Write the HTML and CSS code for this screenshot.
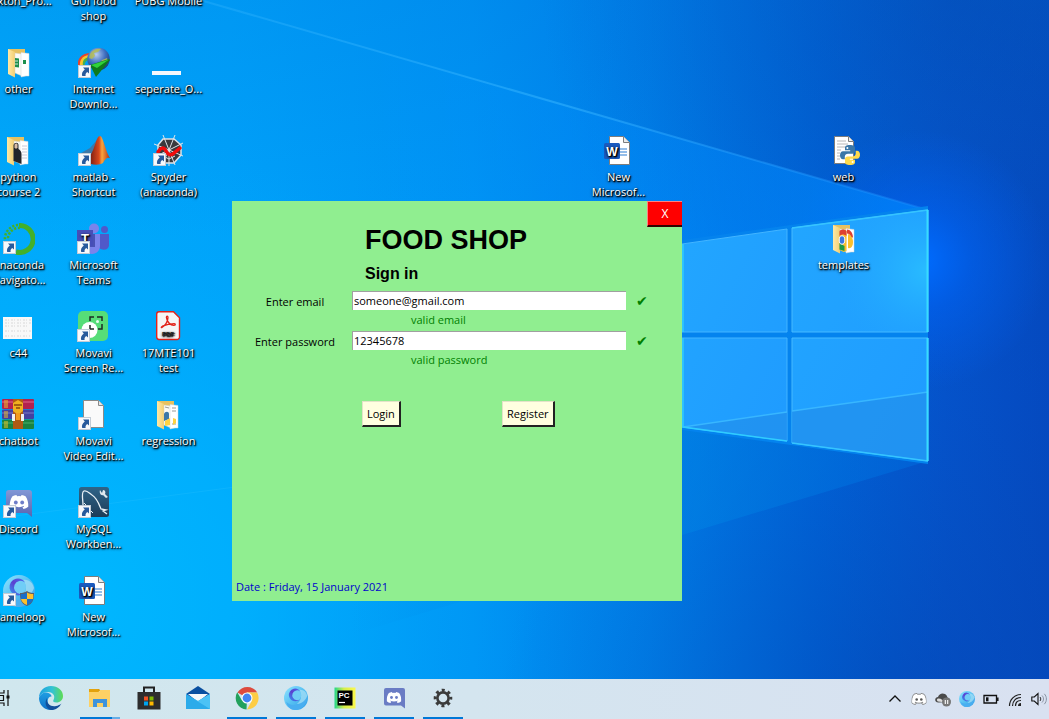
FILE: index.html
```html
<!DOCTYPE html>
<html lang="en">
<head>
<meta charset="utf-8">
<meta name="viewport" content="width=device-width, initial-scale=1">
<title>Food Shop</title>
<link rel="stylesheet" href="styles.css">
</head>
<body class="screen">

<svg class="defs" aria-hidden="true">
  <defs>
    <linearGradient id="folder" x1="0" y1="0" x2="1" y2="0"><stop offset="0" stop-color="#ffe9a6"/><stop offset="1" stop-color="#f3cf73"/></linearGradient>
    <radialGradient id="globe" cx=".4" cy=".3" r=".8"><stop offset="0" stop-color="#b9cdf0"/><stop offset=".5" stop-color="#3f6fc0"/><stop offset="1" stop-color="#12305f"/></radialGradient>
    <linearGradient id="flame" x1="0" y1="0" x2="1" y2="0"><stop offset="0" stop-color="#7a1d12"/><stop offset=".45" stop-color="#d9481c"/><stop offset=".6" stop-color="#f9a53c"/><stop offset="1" stop-color="#b52c12"/></linearGradient>
    <linearGradient id="blurple" x1="0" y1="0" x2="0" y2="1"><stop offset="0" stop-color="#8297d6"/><stop offset="1" stop-color="#5865b0"/></linearGradient>
    <linearGradient id="slate" x1="0" y1="0" x2="0" y2="1"><stop offset="0" stop-color="#2f6488"/><stop offset="1" stop-color="#1d3c58"/></linearGradient>
    <linearGradient id="orb" x1="0" y1="0" x2="1" y2="1"><stop offset="0" stop-color="#8fe4ff"/><stop offset=".5" stop-color="#56c0f2"/><stop offset="1" stop-color="#2f9be8"/></linearGradient>
    <linearGradient id="orbring" x1="1" y1="0" x2="0" y2="1"><stop offset="0" stop-color="#4b6cf0"/><stop offset=".5" stop-color="#5c3fd0"/><stop offset="1" stop-color="#2fa0f5"/></linearGradient>
    <linearGradient id="edgetop" x1="0" y1="0" x2="1" y2="0"><stop offset="0" stop-color="#1c9fe0"/><stop offset=".55" stop-color="#33c3d4"/><stop offset="1" stop-color="#5fdc52"/></linearGradient>
    <linearGradient id="edgeleft" x1="0" y1="0" x2="0" y2="1"><stop offset="0" stop-color="#1f9ee3"/><stop offset="1" stop-color="#0f6fc6"/></linearGradient>
    <linearGradient id="pycharm" x1="0" y1="0" x2="1" y2="0"><stop offset="0" stop-color="#21d789"/><stop offset=".45" stop-color="#d6ee4a"/><stop offset="1" stop-color="#fcf84a"/></linearGradient>

    <symbol id="shortcut" viewBox="0 0 13 13">
      <rect x=".5" y=".5" width="12" height="12" fill="#f7f9fc" stroke="#c3ccd6"/>
      <path d="M5 2.500h6v6L9.300 6.900C7.800 8 7.300 9.200 7.600 11H4.200C3.400 8.600 4.400 6.200 6.800 4.400z" fill="#285a9c"/>
    </symbol>
    <symbol id="word" viewBox="0 0 32 32">
      <path d="M6.500 1.500h14l6 6v22h-20z" fill="#fff" stroke="#7d7d7d"/>
      <path d="M20.500 1.500v6h6" fill="#e9e9e9" stroke="#7d7d7d"/>
      <path d="M17 14h7M17 17h7M17 20h7" stroke="#2b7cd3" stroke-width="1.200"/>
      <rect x="1" y="8" width="16" height="16" rx="1.500" fill="#1a5abe"/>
      <text x="9" y="20.500" text-anchor="middle" font-family="Liberation Sans, sans-serif" font-size="12" font-weight="700" fill="#fff">W</text>
    </symbol>
    <symbol id="folderbase" viewBox="0 0 32 32">
      <path d="M5 2h17v24H5z" fill="#e6c160"/>
      <path d="M5 2l7 3v25.500L5 27z" fill="url(#folder)"/>
      <path d="M12 6l7 1v22l-7-3z" fill="#fbfbf6" stroke="#d8d2bb" stroke-width=".5"/>
      <path d="M18 5.500l8 1V29h-3l-5 1z" fill="#fff" stroke="#cfd4d6" stroke-width=".5"/>
    </symbol>
    <symbol id="python" viewBox="0 0 20 20">
      <path d="M9.800 0C6 0 5 1.200 5 3v2.300h5.200v.9H3C1 6.200 0 8 0 10.200s1 4 3 4h1.800v-2.400c0-1.800 1.400-3 3.200-3h4.400c1.500 0 2.600-1.200 2.600-2.700V3c0-1.800-1.400-3-5.200-3z" fill="#3b77a8"/>
      <path d="M10.200 20c3.800 0 4.800-1.200 4.800-3v-2.300H9.800v-.9H17c2 0 3-1.800 3-4s-1-4-3-4h-1.300v2.600c0 1.800-1.400 3-3.200 3H7.600C6.100 11.400 5 12.500 5 14v3c0 1.800 1.400 3 5.200 3z" fill="#ffda4b"/>
      <circle cx="7.400" cy="2.900" r="1" fill="#fff"/><circle cx="12.600" cy="17.100" r="1" fill="#fff"/>
    </symbol>
    <symbol id="face" viewBox="0 0 24 18">
      <path d="M8.700 0C6.700.3 4.900.9 3.600 1.600 1 5.400-.3 10.200.1 15c2 1.500 4 2.500 6.100 3l1.400-2.300c-.8-.3-1.500-.6-2.100-1l.5-.4c3.900 1.800 8.100 1.800 12 0l.5.4c-.6.4-1.300.7-2.100 1l1.400 2.300c2.100-.5 4.100-1.500 6.100-3 .4-4.800-.9-9.600-3.500-13.400C19.100.9 17.300.3 15.300 0l-.8 1.500a18 18 0 0 0-5 0z"/>
    </symbol>
    <symbol id="gameloop" viewBox="0 0 32 32">
      <circle cx="16" cy="16" r="16" fill="url(#orb)"/>
      <path d="M3 21c5 6 17 7 28-6-1 10-8 17-16 17C9 32 4.500 28 3 21z" fill="#49aef0"/>
      <path d="M20 5c6-1 10 3 11 8-2 6-7 11-14 11 6-4 8-12 3-19z" fill="#a5dff6" opacity=".75"/>
      <circle cx="15" cy="12" r="8" fill="#70cdf6"/>
      <path d="M19 4.500A8.500 8.500 0 1 0 21 18a6.500 6.500 0 0 1-4 1A6.600 6.600 0 1 1 22 7.500 8 8 0 0 0 19 4.500z" fill="url(#orbring)"/>
    </symbol>
    <symbol id="discord" viewBox="0 0 32 32">
      <path d="M6 3h20a3 3 0 0 1 3 3v24l-5-4H6a3 3 0 0 1-3-3V6a3 3 0 0 1 3-3z" fill="url(#blurple)"/>
      <use href="#face" x="6" y="8" width="20" height="14" fill="#fff"/>
      <circle cx="12.800" cy="15.500" r="1.900" fill="#6d7dc8"/><circle cx="19.200" cy="15.500" r="1.900" fill="#6d7dc8"/>
    </symbol>
  </defs>
</svg>

<main class="desktop">
  <svg class="wallpaper" viewBox="0 0 1049 679" preserveAspectRatio="xMinYMin slice" aria-hidden="true">
    <defs>
      <linearGradient id="sky" x1="0" y1="0" x2="1" y2="0">
        <stop offset="0" stop-color="#00a9fb"/><stop offset=".22" stop-color="#00a2fa"/><stop offset=".45" stop-color="#0094f4"/><stop offset=".62" stop-color="#0080ea"/><stop offset=".78" stop-color="#0064da"/><stop offset=".9" stop-color="#0553cc"/><stop offset="1" stop-color="#0549c0"/>
      </linearGradient>
      <radialGradient id="halo" gradientUnits="userSpaceOnUse" cx="920" cy="260" r="130"><stop offset="0" stop-color="#006cff"/><stop offset=".4" stop-color="#0063f5" stop-opacity=".55"/><stop offset="1" stop-color="#0060f0" stop-opacity="0"/></radialGradient>
      <radialGradient id="shadetop" gradientUnits="userSpaceOnUse" cx="960" cy="-20" r="420"><stop offset="0" stop-color="#0443a8" stop-opacity=".55"/><stop offset="1" stop-color="#0450b8" stop-opacity="0"/></radialGradient>
      <radialGradient id="shadebottom" gradientUnits="userSpaceOnUse" cx="900" cy="720" r="400"><stop offset="0" stop-color="#0342ac" stop-opacity=".5"/><stop offset="1" stop-color="#0450b8" stop-opacity="0"/></radialGradient>
      <linearGradient id="cone" gradientUnits="userSpaceOnUse" x1="350" y1="0" x2="928" y2="0"><stop offset="0" stop-color="#0094ff" stop-opacity="0"/><stop offset="1" stop-color="#0088ff" stop-opacity=".7"/></linearGradient>
      <linearGradient id="conelow" gradientUnits="userSpaceOnUse" x1="350" y1="0" x2="928" y2="0"><stop offset="0" stop-color="#0084e4" stop-opacity="0"/><stop offset=".6" stop-color="#0084e4" stop-opacity=".5"/><stop offset="1" stop-color="#0068dc" stop-opacity=".6"/></linearGradient>
      <radialGradient id="lower" gradientUnits="userSpaceOnUse" cx="60" cy="600" r="480"><stop offset="0" stop-color="#00bbff" stop-opacity=".85"/><stop offset=".4" stop-color="#00b6ff" stop-opacity=".6"/><stop offset="1" stop-color="#00a8fa" stop-opacity="0"/></radialGradient>
      <linearGradient id="dim" gradientUnits="userSpaceOnUse" x1="0" y1="0" x2="0" y2="240"><stop offset="0" stop-color="#0070d8" stop-opacity=".2"/><stop offset="1" stop-color="#0070d8" stop-opacity="0"/></linearGradient>
      <linearGradient id="ray" gradientUnits="userSpaceOnUse" x1="200" y1="0" x2="928" y2="0"><stop offset="0" stop-color="#39b8ff" stop-opacity=".3"/><stop offset=".5" stop-color="#35b4ff" stop-opacity=".55"/><stop offset="1" stop-color="#2090ff" stop-opacity=".35"/></linearGradient>
      <linearGradient id="pane" x1="0" y1="0" x2="1" y2="1"><stop offset="0" stop-color="#22a6ff"/><stop offset="1" stop-color="#1f9bff"/></linearGradient>
      <radialGradient id="paneglow" cx="1" cy=".5" r=".7"><stop offset="0" stop-color="#29bcff"/><stop offset="1" stop-color="#22a8ff" stop-opacity="0"/></radialGradient>
    </defs>
    <rect width="1049" height="679" fill="url(#sky)"/>
    <rect width="1049" height="679" fill="url(#shadetop)"/>
    <rect width="1049" height="679" fill="url(#shadebottom)"/>
    <rect width="1049" height="240" fill="url(#dim)"/>
    <rect width="1049" height="679" fill="url(#lower)"/>
    <circle cx="920" cy="260" r="130" fill="url(#halo)"/>
    <path d="M200 0L928 210V461L683 427 350 470V43z" fill="url(#cone)"/>
    <path d="M683 427L928 461 350 635V470z" fill="url(#conelow)"/>
    <path d="M200 0L928 210" stroke="url(#ray)" stroke-width="2"/>
    <path d="M0 518L683 428" stroke="#2fc4ff" opacity=".25"/>
    <path d="M682 240L928 206V464L682 430z" fill="#0483ee"/>
    <path d="M682 244L787 229V332H682zM682 338H787V441L682 427z" fill="url(#pane)" stroke="#42b4ff"/>
    <path d="M792 228L928 210V332H792zM792 338H928V461L792 443z" fill="url(#pane)" stroke="#46baff"/>
    <path d="M792 228L928 210V332H792z" fill="url(#paneglow)"/>
    <path d="M683 427L787 412V441zM792 411L928 392V461L792 443z" fill="#2290ee" opacity=".75"/>
    <path d="M683 427L787 412M792 411L928 392" stroke="#38b6ff" stroke-width="1.500"/>
    <path d="M792 228L928 210M928 461L792 443" fill="none" stroke="#35c4ff" stroke-width="1.500"/>
    <path d="M927.500 210V332M927.500 338V461" fill="none" stroke="#38dcff" stroke-width="2"/>
    <path d="M683 244V332M683 338V427L787 441" fill="none" stroke="#2fccff" stroke-width="1.500"/>
  </svg>

  <ul class="icons">
    <li class="slot c1 r1"><button class="shortcut"><span class="picture"></span>Sexton_Pro...</button></li>
    <li class="slot c2 r1"><button class="shortcut"><span class="picture"></span>GUI food<br>shop</button></li>
    <li class="slot c3 r1"><button class="shortcut"><span class="picture"></span>PUBG Mobile</button></li>

    <li class="slot c1 r2"><button class="shortcut">
      <svg class="picture" viewBox="0 0 32 32"><use href="#folderbase"/><path d="M12 11l4 .5v9L12 20zM20 13h3v4h-3z" fill="#1d8f4d"/><path d="M12 14h3M12 17h3" stroke="#fff" stroke-width=".8"/></svg>other</button></li>
    <li class="slot c2 r2"><button class="shortcut">
      <svg class="picture" viewBox="0 0 32 32">
        <path d="M11 6C3 7-1 12 0 19h5C5 14 7 11 13 10z" fill="#e8442c"/><path d="M11 8C4 9 1.500 13 2 19H6c-.5-5 1-8 7-9z" fill="#f7c52c"/><path d="M11 10c-5 1-7 4-6 9h2c-1-3 1-6 5-6z" fill="#46b04a"/>
        <circle cx="20.500" cy="12" r="11.200" fill="url(#globe)"/><path d="M12 7c2-4 7-6 11-5l-3 3-4 1 1 3-3 3-3-1zM24 13l5-2 1 3-4 4-4-2z" fill="#b9bf4c" opacity=".8"/>
        <path d="M12 18l19-6 1 1-14 17z" fill="#0e7a1b"/><path d="M13 18l18-5.500-12 8.500z" fill="#2fd23a"/><use href="#shortcut" x="0" y="18" width="13" height="13"/></svg>Internet<br>Downlo...</button></li>
    <li class="slot c3 r2"><button class="shortcut">
      <svg class="picture" viewBox="0 0 32 32"><path d="M0 24h29v4H0z" fill="#f5f7fc"/></svg>seperate_O...</button></li>

    <li class="slot c1 r3"><button class="shortcut">
      <svg class="picture" viewBox="0 0 32 32"><use href="#folderbase"/><path d="M11.500 10c1-3 5-3 5 0v4c2 1 3 3 3 5v10l-8-3z" fill="#23262b"/><path d="M12.500 9.500c1-1.500 3-1.500 3 0v3l-1.500 1.500-1.500-1.500z" fill="#d8bda8"/><path d="M20 11h5M20 14h5M20 17h5M20 20h5M20 23h5" stroke="#bbc" stroke-width=".8"/></svg>python<br>course 2</button></li>
    <li class="slot c2 r3"><button class="shortcut">
      <svg class="picture" viewBox="0 0 32 32"><path d="M3 18l9-5 6-7-4 14-4 4z" fill="#3d79a8"/><path d="M12 21C17 14 18 1 22 1c3 0 5 14 10 22-3-1-5 1-7 5-3 2-8 2-12 1z" fill="url(#flame)"/><use href="#shortcut" x="0" y="18" width="13" height="13"/></svg>matlab -<br>Shortcut</button></li>
    <li class="slot c3 r3"><button class="shortcut">
      <svg class="picture" viewBox="0 0 32 32"><path d="M10 4h11l7 6v10l-7 8H11l-6-8V10z" fill="#3a3a3d" stroke="#dfe3e8" stroke-width="1.500"/><path d="M10 0l6 15L22 0M1 9l15 6L30 8M1 22l15-7 14 6M16 15v16M10 27l6-12 6 15M10 21l6 3 6-3" fill="none" stroke="#dfe3e8"/><path d="M5 17c3-5 6-5 8-1s5 5 8 2l6-5" fill="none" stroke="#f20c0c" stroke-width="3.500" stroke-linecap="round"/><use href="#shortcut" x="0" y="18" width="13" height="13"/></svg>Spyder<br>(anaconda)</button></li>

    <li class="slot c1 r4"><button class="shortcut">
      <svg class="picture" viewBox="0 0 32 32"><path d="M16 2.500A13.500 13.500 0 1 1 13 29" fill="none" stroke="#43b02a" stroke-width="5"/><path d="M15 2A14 14 0 0 0 2 18M17 5A11 11 0 0 0 5 17" fill="none" stroke="#43b02a" stroke-width="2.500" stroke-dasharray="2.200 1.600"/><use href="#shortcut" x="0" y="18" width="13" height="13"/></svg>Anaconda<br>Navigato...</button></li>
    <li class="slot c2 r4"><button class="shortcut">
      <svg class="picture" viewBox="0 0 32 32"><circle cx="17" cy="5.500" r="5" fill="#7b83eb"/><circle cx="27.500" cy="6.500" r="3.500" fill="#5059c9"/><path d="M22 11h10v11c0 5-6 6-10 3z" fill="#5059c9"/><path d="M9 11h14v12c0 4-3 8-8 8s-8-4-7-8z" fill="#7b83eb"/><path d="M9 11h9v13H9z" fill="#4a52b5"/><rect y="7" width="16" height="16" fill="#464eb8"/><text x="8" y="19.500" text-anchor="middle" font-family="Liberation Sans, sans-serif" font-size="13" font-weight="700" fill="#fff">T</text><use href="#shortcut" x="0" y="18" width="13" height="13"/></svg>Microsoft<br>Teams</button></li>

    <li class="slot c1 r5"><button class="shortcut">
      <svg class="picture" viewBox="0 0 32 32"><path d="M0 6h29v22H0z" fill="#f8f8f8"/><path d="M2 9h26M2 12h26M2 15h22M2 20h26M2 25h25" stroke="#cfcfcf" stroke-dasharray="2 1 1 2" stroke-width=".8"/></svg>c44</button></li>
    <li class="slot c2 r5"><button class="shortcut">
      <svg class="picture" viewBox="0 0 32 32"><rect x="1" width="30" height="30" rx="5" fill="#56dd78"/><circle cx="12.500" cy="19" r="8" fill="#fff"/><path d="M13 10V6h4M20 6h5v4M25 13v5h-4M17 18h-4v-4" fill="none" stroke="#1f2a25" stroke-width="1.500"/><circle cx="20.500" cy="10.500" r="1.500" fill="#e9fff0"/><use href="#shortcut" x="0" y="18" width="13" height="13"/></svg>Movavi<br>Screen Re...</button></li>
    <li class="slot c3 r5"><button class="shortcut">
      <svg class="picture" viewBox="0 0 32 32"><path d="M7 .8h14.500l6 6V26a2.500 2.500 0 0 1-2.500 2.500H7A2.500 2.500 0 0 1 4.700 26V3A2.300 2.300 0 0 1 7 .8z" fill="#f6f6f6" stroke="#e2231a" stroke-width="1.400"/><path d="M10 16.500c3-1.500 6-6 6-10 0-1.800-1.800-1.800-1.600 0 .4 4 4 8 7.600 7.800 1.800 0 1.600-1.700 0-1.700-4 0-8 1-11.600 2.600-1.500.8-1.300 2-.4 1.300z" fill="none" stroke="#e2231a" stroke-width="1.300"/><text x="16" y="25" text-anchor="middle" font-family="Liberation Sans, sans-serif" font-size="6" font-weight="700" fill="#222">PDF</text></svg>17MTE101<br>test</button></li>

    <li class="slot c1 r6"><button class="shortcut">
      <svg class="picture" viewBox="0 0 32 32"><rect width="32" height="10" rx="1" fill="#b3224f"/><rect y="10.500" width="32" height="9.500" rx="1" fill="#4441a0"/><rect y="20.500" width="32" height="9.500" rx="1" fill="#1b8341"/><path d="M0 3h32" stroke="#e0688a"/><path d="M0 14h32" stroke="#7c7ac6"/><path d="M0 24h32" stroke="#4db06e"/><path d="M3 1v8M3 12v7M3 22v7M5 1v8M5 12v7M5 22v7" stroke="#f0c420"/><rect x="11" width="10" height="30" fill="#b05a14"/><path d="M11 4l5-3 5 3v8l-5 4-5-4z" fill="#f0b020"/><path d="M12 6h8M14 9h4" stroke="#8a4a0a" stroke-width="1.500"/><path d="M10 15h3v7h-3zM19 15h3v7h-3z" fill="#f0f0f0"/><rect x="14" y="14" width="4" height="7" fill="#f39b1c"/></svg>chatbot</button></li>
    <li class="slot c2 r6"><button class="shortcut">
      <svg class="picture" viewBox="0 0 32 32"><path d="M5.500 1.500h15l5 5v22h-20z" fill="#fafafa" stroke="#8a8a8a"/><path d="M20.500 1.500v5h5" fill="#e6e6e6" stroke="#8a8a8a"/><use href="#shortcut" x="0" y="18" width="13" height="13"/></svg>Movavi<br>Video Edit...</button></li>
    <li class="slot c3 r6"><button class="shortcut">
      <svg class="picture" viewBox="0 0 32 32"><use href="#folderbase"/><path d="M13 8l4 1M20 9h4M20 12h4M20 25h4" stroke="#999"/><path d="M12 15c1-3 5-3 5 0v5l-5 2z" fill="#3b77a8"/><path d="M13 22l5-3v7l-5 1zM21 19l3 1v4l-3 2z" fill="#ffd343"/></svg>regression</button></li>

    <li class="slot c1 r7"><button class="shortcut">
      <svg class="picture" viewBox="0 0 32 32"><use href="#discord"/><use href="#shortcut" x="0" y="18" width="13" height="13"/></svg>Discord</button></li>
    <li class="slot c2 r7"><button class="shortcut">
      <svg class="picture" viewBox="0 0 32 32"><rect x="1" width="30" height="30" rx="2.500" fill="url(#slate)"/><path d="M5 18C5 12 3 5 6 4c3-1 5 2 8 4 5 3 7 9 9 14l5 1-3 1 4 3" fill="none" stroke="#e8f0f6" stroke-width="1.300"/><path d="M6 16l3 3 4 1M12 23l3 3" fill="none" stroke="#e8f0f6"/><path d="M22 3l2 3 1-3c2 0 3 2 2 4l3 3-2 1-3-3c-2 1-4-2-3-5z" fill="#dfe8ee"/><use href="#shortcut" x="0" y="18" width="13" height="13"/></svg>MySQL<br>Workben...</button></li>

    <li class="slot c1 r8"><button class="shortcut">
      <svg class="picture" viewBox="0 0 32 32"><use href="#gameloop"/><path d="M24 16c2 1.500 4.500 2 7 2 0 6-1 11-7 13-6-2-7-7-7-13 2.500 0 5-.5 7-2z" fill="#5d5f66"/><path d="M24 17.500V24h-6c-.3-1.500-.3-3-.2-5 2.200 0 4.400-.4 6.200-1.500zM24 24h6c-.5 2.800-2.500 4.800-6 6z" fill="#1b6fc8"/><path d="M24 17.500c1.800 1.100 4 1.500 6.200 1.500.1 2 .1 3.500-.2 5h-6zM24 24v6c-3.500-1.200-5.500-3.200-6-6z" fill="#fcc02c"/><use href="#shortcut" x="0" y="18" width="13" height="13"/></svg>Gameloop</button></li>
    <li class="slot c2 r8"><button class="shortcut"><svg class="picture" viewBox="0 0 32 32"><use href="#word"/></svg>New<br>Microsof...</button></li>

    <li class="slot c9 r3"><button class="shortcut"><svg class="picture" viewBox="0 0 32 32"><use href="#word"/></svg>New<br>Microsof...</button></li>
    <li class="slot c12 r3"><button class="shortcut">
      <svg class="picture" viewBox="0 0 32 32"><path d="M6.500 1.500h14l5 5v22h-19z" fill="#fff" stroke="#7d7d7d"/><path d="M20.500 1.500v5h5" fill="#eee" stroke="#7d7d7d"/><path d="M9 6h9M9 9h11M9 12h8M9 15h4M9 18h3M9 21h3M9 24h3" stroke="#b8b8b8"/><use href="#python" x="12" y="10" width="20" height="20"/></svg>web</button></li>
    <li class="slot c12 r4"><button class="shortcut">
      <svg class="picture" viewBox="0 0 32 32"><use href="#folderbase"/><path d="M11.500 9c2-2.500 5-3 7-1v20l-3 1-4-2z" fill="#fbbf2b"/><path d="M11.500 13V8c2-2 5-2 7 0v5c-2-2-5-2-7 0z" fill="#dd4132"/><path d="M11.500 20l5 3v5l-5-1.500z" fill="#1d9a4a"/><ellipse cx="14" cy="17" rx="2.800" ry="4.200" fill="#3b78e0" stroke="#fff"/><path d="M19 6.500c3 0 6 3 6 8h-2c-1-3-2-4-4-4z" fill="#dd4132"/><path d="M20 11c3 1 5 4 5 8s-2 7-5 6z" fill="#fbc02d"/></svg>templates</button></li>
  </ul>

  <section class="window" aria-labelledby="shop">
    <button class="close" type="button">X</button>
    <h1 class="title" id="shop">FOOD SHOP</h1>
    <h2 class="subtitle">Sign in</h2>
    <form class="form">
      <label class="label" for="email">Enter email</label>
      <input class="field" id="email" type="text" value="someone@gmail.com">
      <span class="tick">✔</span>
      <p class="hint">valid email</p>
      <label class="label" for="password">Enter password</label>
      <input class="field" id="password" type="text" value="12345678">
      <span class="tick">✔</span>
      <p class="hint">valid password</p>
      <div class="actions">
        <button class="action" type="button">Login</button>
        <button class="action" type="button">Register</button>
      </div>
    </form>
    <p class="date">Date : Friday, 15 January 2021</p>
  </section>
</main>

<footer class="taskbar">
  <nav class="apps" aria-label="Apps">
    <button class="app" aria-label="Task view"><svg class="glyph" viewBox="0 0 24 24"><path d="M4 4v3h10V4M4 20v-3h10v3M4.500 9.500h9v5h-9zM18 4v16" fill="none" stroke="#111" stroke-width="1.200"/><path d="M16.500 9.500h3v3h-3z" fill="#111"/></svg></button>
    <button class="app" aria-label="Edge"><svg class="glyph" viewBox="0 0 24 24"><path d="M0 12C0 5 5 0 12 0c7 0 12 4.500 12 10 0 4-3 6.500-6.500 6.500-3 0-4-1-3-2.500C17 9 13 6 9 6 5 6 1 8 0 12z" fill="url(#edgetop)"/><path d="M0 12c1-4 5-6 8-5.500 3 .5 4.500 2.500 4.500 4-3 0-4.500 3-3.500 6.500 1 3.500 4 6 7 6-3 1.500-6 1.200-9 0C3 21 0 17 0 12z" fill="url(#edgeleft)"/><path d="M8 12c-1 6 4 9 9 8 2-.3 4-1.200 5.500-2.500C20 22 16 24 12 24c-5-1.500-7-7-4-12z" fill="#124f9b"/></svg></button>
    <button class="app partial" aria-label="File Explorer"><svg class="glyph" viewBox="0 0 24 24"><path d="M2 3h9l2 2H2z" fill="#d99a0c"/><path d="M1 3h9l1 3H1z" fill="#e3a20c"/><path d="M1 6h10l1-2h10v17H1z" fill="#fdd165"/><path d="M5 13h14v8h-4v-4H9v4H5z" fill="#3e94dc"/></svg></button>
    <button class="app" aria-label="Store"><svg class="glyph" viewBox="0 0 24 24"><path d="M7 6V1.500h10V6" fill="none" stroke="#222" stroke-width="2"/><path d="M.500 6h23v17.500H.5z" fill="#2d2d2d"/><path d="M7 10.500h4v4H7z" fill="#f25022"/><path d="M12.500 10.500h4v4h-4z" fill="#7fba00"/><path d="M7 15.500h4v4H7z" fill="#00a4ef"/><path d="M12.500 15.500h4v4h-4z" fill="#ffb900"/></svg></button>
    <button class="app" aria-label="Mail"><svg class="glyph" viewBox="0 0 24 24"><path d="M0 8l12-8 12 8-12 9z" fill="#0a4fa0"/><path d="M2 8h20l-10 8z" fill="#f5f7fa"/><path d="M0 8l12 7L24 8v15H0z" fill="#2cabea"/><path d="M24 8v15L7 12.500l5 2.500z" fill="#4cc2f5"/></svg></button>
    <button class="app open" aria-label="Chrome"><svg class="glyph" viewBox="0 0 24 24"><path d="M12 12L2.500 6.500A11.500 11.500 0 0 1 22.200 6.500H12z" fill="#dd4b3e"/><path d="M12 12l-.5 11.500A11.500 11.500 0 0 1 2.200 6.300L7 14.500z" fill="#23a15c"/><path d="M12 6.500h10.200A11.500 11.500 0 0 1 12 23.500l5-9z" fill="#fdcd45"/><circle cx="12" cy="12" r="5.500" fill="#fff"/><circle cx="12" cy="12" r="4.400" fill="#4285f4"/></svg></button>
    <button class="app open" aria-label="Gameloop"><svg class="glyph" viewBox="0 0 24 24"><use href="#gameloop"/></svg></button>
    <button class="app open" aria-label="PyCharm"><svg class="glyph" viewBox="0 0 24 24"><path d="M1.500 1.500h21v21h-21z" fill="url(#pycharm)"/><path d="M4.500 4.500h15v15h-15z" fill="#000"/><text x="5.500" y="12" font-family="Liberation Sans, sans-serif" font-size="8" font-weight="700" fill="#fff">PC</text><path d="M6 16.500h6" stroke="#fff" stroke-width="1.200"/></svg></button>
    <button class="app open" aria-label="Discord"><svg class="glyph" viewBox="0 0 24 24"><path d="M4 2h17a2 2 0 0 1 2 2v18.500l-4-3H4a2 2 0 0 1-2-2V4a2 2 0 0 1 2-2z" fill="#6a7cc4"/><use href="#face" x="4.500" y="6" width="15" height="11" fill="#fff"/><circle cx="9.500" cy="11.500" r="1.400" fill="#6a7cc4"/><circle cx="14.500" cy="11.500" r="1.400" fill="#6a7cc4"/></svg></button>
    <button class="app open" aria-label="Settings"><svg class="glyph" viewBox="0 0 24 24"><circle cx="12" cy="12" r="5.600" fill="none" stroke="#3b3b3b" stroke-width="2.600"/><circle cx="12" cy="12" r="7.800" fill="none" stroke="#3b3b3b" stroke-width="3" stroke-dasharray="3 3.126" stroke-dashoffset="1.500"/></svg></button>
  </nav>
  <div class="tray">
    <button class="status" aria-label="Show hidden icons"><svg class="mark" viewBox="0 0 16 16"><path d="M2.500 10.500L8 5l5.500 5.500" fill="none" stroke="#111" stroke-width="1.300"/></svg></button>
    <button class="status" aria-label="Discord"><svg class="mark" viewBox="0 0 16 16"><use href="#face" x=".5" y="2" width="15" height="12" fill="#fff" stroke="#777" stroke-width="1.300"/><circle cx="5.700" cy="8.500" r="1.300" fill="#555"/><circle cx="10.300" cy="8.500" r="1.300" fill="#555"/></svg></button>
    <button class="status" aria-label="OneDrive"><svg class="mark" viewBox="0 0 16 16"><path d="M3.500 11.500C1 11.500 0 10 .2 8.500.4 7 1.500 6 3 6c1-3 4-4.500 7-3 1.500 1 2 2 2.500 3.500C15 7 16 9 15 11z" fill="#4a4a4a"/><path d="M3 10.500c-1.500-.5-1.500-3 .5-3l2 .2L9 10l-2 1z" fill="#ddd"/><circle cx="11.500" cy="11" r="4.500" fill="#777"/><path d="M10.300 9v4M12.700 9v4" stroke="#fff" stroke-width="1.100"/></svg></button>
    <button class="status" aria-label="Gameloop"><svg class="mark" viewBox="0 0 16 16"><use href="#gameloop"/></svg></button>
    <button class="status" aria-label="Battery"><svg class="mark" viewBox="0 0 16 16"><path d="M1 4.500h12.500v7.500H1z" fill="none" stroke="#111" stroke-width="1.300"/><path d="M3 6.300h2.500v4H3z" fill="#111"/><path d="M14.800 6.500v3.500" stroke="#111" stroke-width="1.500"/></svg></button>
    <button class="status" aria-label="Wi-Fi"><svg class="mark" viewBox="0 0 16 16"><path d="M2.500 15C2.500 8.500 7.500 3.500 14 3.500M5.500 15c0-5 3.500-8.500 8.500-8.500M8.500 15c0-3.500 2-5.500 5.500-5.500" fill="none" stroke="#222" stroke-width="1.200"/><path d="M11 15a3 3 0 0 1 3-3v3z" fill="#222"/></svg></button>
    <button class="status" aria-label="Volume"><svg class="mark" viewBox="0 0 16 16"><path d="M.8 6h2.500L7 2.500v11L3.300 10H.8z" fill="none" stroke="#111" stroke-width="1.100"/><path d="M9 6c1 1.200 1 2.800 0 4" fill="none" stroke="#333"/><path d="M11 4.500c2 2 2 5 0 7M13.300 2.800c2.800 3 2.800 7.400 0 10.400" fill="none" stroke="#8a93a3"/></svg></button>
  </div>
</footer>
</body>
</html>
```
FILE: styles.css
```css
* {
  box-sizing: border-box;
}

.screen {
  margin: 0;
  height: 100vh;
  display: flex;
  flex-direction: column;
  overflow: hidden;
  font-family: "Open Sans", "Noto Sans", sans-serif;
  font-size: 11px;
  line-height: 15px;
  background: #00a6fb;
}

.defs {
  position: absolute;
  width: 0;
  height: 0;
}

button {
  font: inherit;
  color: inherit;
  padding: 0;
  border: 0;
  background: none;
}

.desktop {
  position: relative;
  flex: 1;
  min-height: 0;
  overflow: hidden;
}

.wallpaper {
  position: absolute;
  inset: 0;
  width: 100%;
  height: 100%;
}

/* Desktop grid: the first row and column run past the screen edge */
.icons {
  position: relative;
  list-style: none;
  margin: -44px 0 0 -19px;
  padding: 0;
  display: grid;
  grid-template-columns: repeat(14, 75px);
  grid-auto-rows: 88px;
}

.slot {
  display: flex;
  justify-content: center;
}

.shortcut {
  display: flow-root;
  padding-top: 3px;
  align-self: flex-start;
  white-space: nowrap;
  text-align: center;
  color: #fff;
  text-shadow: 1px 1px 1px #000, 1px 1px 2px #000, 0 1px 3px rgba(0, 0, 0, 0.8);
}

.picture {
  display: block;
  width: 32px;
  height: 32px;
  margin: 0 auto 2px;
}

.c1 { grid-column: 1; }
.c2 { grid-column: 2; }
.c3 { grid-column: 3; }
.c9 { grid-column: 9; }
.c12 { grid-column: 12; }
.r1 { grid-row: 1; }
.r2 { grid-row: 2; }
.r3 { grid-row: 3; }
.r4 { grid-row: 4; }
.r5 { grid-row: 5; }
.r6 { grid-row: 6; }
.r7 { grid-row: 7; }
.r8 { grid-row: 8; }

/* Application window, floating over the desktop */
.window {
  position: absolute;
  left: 232px;
  top: 201px;
  width: 450px;
  min-height: 400px;
  padding: 24px 0 7px;
  display: flex;
  flex-direction: column;
  background: #90ee90;
  color: #000;
}

.close {
  position: absolute;
  top: 0;
  right: 0;
  width: 35px;
  height: 26px;
  background: #f00;
  color: #fff;
  font-size: 12px;
  border-top: 1px solid #ff8080;
  border-left: 1px solid #ff8080;
  border-bottom: 2px solid #300;
}

.title,
.subtitle {
  margin: 0 0 0 133px;
  font-family: "Liberation Sans", Arial, sans-serif;
  font-weight: 700;
}

.title {
  font-size: 27px;
  line-height: 30px;
}

.subtitle {
  margin-top: 9px;
  margin-bottom: 7px;
  font-size: 16px;
  line-height: 20px;
}

.form {
  display: grid;
  grid-template-columns: 120px 274px 1fr;
  grid-auto-rows: 20px;
  align-items: center;
}

.label {
  padding-left: 6px;
  text-align: center;
}

.field {
  width: 100%;
  height: 19px;
  align-self: start;
  padding: 0 1px 1px;
  border: 0;
  border-top: 1px solid #a0a0a0;
  border-left: 1px solid #a0a0a0;
  background: #fff;
  font: inherit;
  color: #000;
}

.tick {
  padding-left: 10px;
  font-family: "DejaVu Sans", sans-serif;
  font-size: 14px;
  line-height: 20px;
  color: #008000;
}

.hint {
  grid-column: 2 / -1;
  align-self: start;
  margin: 0;
  padding: 1px 0 0 59px;
  color: #008000;
}

.actions {
  grid-column: 1 / -1;
  align-self: start;
  padding: 30px 0 0 130px;
  display: grid;
  grid-template-columns: repeat(2, 140px);
  justify-items: start;
}

.action {
  height: 26px;
  padding: 0 4px;
  background: #ffffe0;
  border-top: 1px solid #e3e3c8;
  border-left: 1px solid #e3e3c8;
  border-right: 2px solid #222;
  border-bottom: 2px solid #222;
}

.date {
  margin: auto 0 0;
  padding-left: 4px;
  color: #0000cd;
}

.taskbar {
  flex: none;
  height: 40px;
  display: flex;
  justify-content: space-between;
  overflow: hidden;
  background: linear-gradient(90deg, #d0e7ee, #d4e5ef 45%, #d9e1f1);
}

.apps {
  display: flex;
  margin-left: -23px;
}

.app {
  width: 49px;
  display: grid;
  place-items: center;
  border-bottom: 2px solid transparent;
}

.open,
.partial {
  background: linear-gradient(#0078d7, #0078d7) center bottom / 40px 2px no-repeat border-box;
}

.partial {
  background-image: linear-gradient(90deg, #0078d7 32px, #66aee7 32px);
}

.glyph {
  width: 24px;
  height: 24px;
}

.tray {
  display: flex;
  margin-right: -2px;
}

.status {
  width: 24px;
  display: grid;
  place-items: center;
}

.mark {
  width: 16px;
  height: 16px;
}
```
